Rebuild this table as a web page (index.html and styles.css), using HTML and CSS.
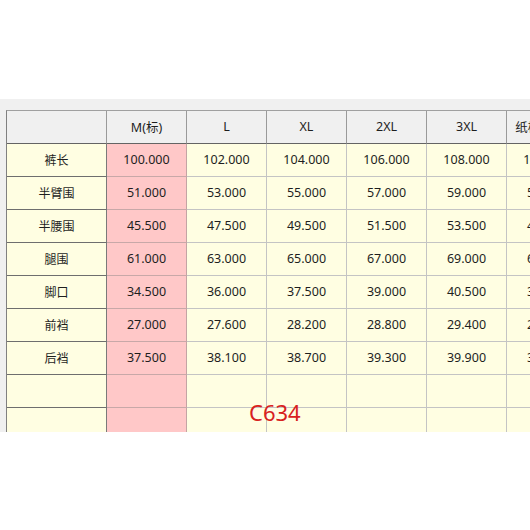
FILE: index.html
```html
<!DOCTYPE html>
<html lang="zh">
<head>
<meta charset="utf-8">
<link rel="stylesheet" href="styles.css">
</head>
<body>
<div class="panel">
  <div class="grid">
    <div class="cell head corner"></div>
    <div class="cell head">M(标)</div>
    <div class="cell head">L</div>
    <div class="cell head">XL</div>
    <div class="cell head">2XL</div>
    <div class="cell head">3XL</div>
    <div class="cell head">纸样尺寸值</div>

    <div class="cell name">裤长</div>
    <div class="cell base">100.000</div>
    <div class="cell">102.000</div>
    <div class="cell">104.000</div>
    <div class="cell">106.000</div>
    <div class="cell">108.000</div>
    <div class="cell">100.000</div>

    <div class="cell name">半臂围</div>
    <div class="cell base">51.000</div>
    <div class="cell">53.000</div>
    <div class="cell">55.000</div>
    <div class="cell">57.000</div>
    <div class="cell">59.000</div>
    <div class="cell">51.000</div>

    <div class="cell name">半腰围</div>
    <div class="cell base">45.500</div>
    <div class="cell">47.500</div>
    <div class="cell">49.500</div>
    <div class="cell">51.500</div>
    <div class="cell">53.500</div>
    <div class="cell">45.500</div>

    <div class="cell name">腿围</div>
    <div class="cell base">61.000</div>
    <div class="cell">63.000</div>
    <div class="cell">65.000</div>
    <div class="cell">67.000</div>
    <div class="cell">69.000</div>
    <div class="cell">61.000</div>

    <div class="cell name">脚口</div>
    <div class="cell base">34.500</div>
    <div class="cell">36.000</div>
    <div class="cell">37.500</div>
    <div class="cell">39.000</div>
    <div class="cell">40.500</div>
    <div class="cell">34.500</div>

    <div class="cell name">前裆</div>
    <div class="cell base">27.000</div>
    <div class="cell">27.600</div>
    <div class="cell">28.200</div>
    <div class="cell">28.800</div>
    <div class="cell">29.400</div>
    <div class="cell">27.000</div>

    <div class="cell name">后裆</div>
    <div class="cell base">37.500</div>
    <div class="cell">38.100</div>
    <div class="cell">38.700</div>
    <div class="cell">39.300</div>
    <div class="cell">39.900</div>
    <div class="cell">37.500</div>

    <div class="cell name"></div>
    <div class="cell base"></div>
    <div class="cell"></div>
    <div class="cell"></div>
    <div class="cell"></div>
    <div class="cell"></div>
    <div class="cell"></div>

    <div class="cell name"></div>
    <div class="cell base"></div>
    <div class="cell"></div>
    <div class="cell"></div>
    <div class="cell"></div>
    <div class="cell"></div>
    <div class="cell"></div>
  </div>
  <div class="mark">C634</div>
</div>
</body>
</html>
```

FILE: styles.css
```css
html, body {
  margin: 0;
  padding: 0;
  background: #ffffff;
}

.panel {
  position: relative;
  margin-top: 99px;
  height: 333px;
  background: #f0f0f0;
  padding: 11px 0 0 6px;
  box-sizing: border-box;
  overflow: hidden;
}

.grid {
  display: grid;
  grid-template-columns: 100px repeat(6, 80px);
  grid-auto-rows: 33px;
  width: max-content;
  border-top: 1px solid #a0a0a0;
  border-left: 1px solid #808080;
  font-family: "Noto Sans", "Noto Sans CJK SC", sans-serif;
  font-size: 12.5px;
  color: #1e1e1e;
}

.cell {
  box-sizing: border-box;
  display: flex;
  align-items: center;
  justify-content: center;
  padding-bottom: 2px;
  background: #fffee2;
  border-right: 1px solid #c4c4c4;
  border-bottom: 1px solid #c4c4c4;
  white-space: nowrap;
}

.head {
  background: #f0f0f0;
  border-right: 1px solid #9a9a9a;
  border-bottom: 1px solid #646464;
}

.name {
  border-right: 1px solid #7a7a7a;
  border-bottom: 1px solid #6e6e6e;
  font-family: "Noto Sans CJK SC", sans-serif;
  font-size: 12px;
}

.base {
  background: #ffc8c8;
  border-right: 1px solid #c4a4a4;
  border-bottom: 1px solid #c8a8a8;
}

.mark {
  position: absolute;
  left: 249px;
  top: 298px;
  font-family: "Noto Sans", sans-serif;
  font-size: 22px;
  color: #d8221e;
}
```
